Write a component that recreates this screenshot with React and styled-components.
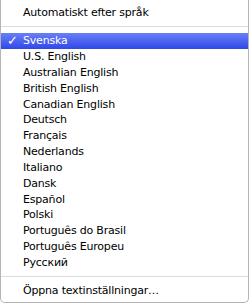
import React from 'react';
import styled, { createGlobalStyle } from 'styled-components';

const GlobalStyle = createGlobalStyle`
  body {
    margin: 0;
    background: #ffffff;
    font-family: "DejaVu Sans", "Liberation Sans", sans-serif;
  }
`;

const Menu = styled.div`
  width: 249px;
  height: 303px;
  box-sizing: border-box;
  background: #ffffff;
  border: 1px solid #b4b4b4;
  border-top: none;
  border-radius: 0 0 5px 5px;
  padding: 5px 0 4px;
  display: flex;
  flex-direction: column;
`;

const Item = styled.div`
  height: 16px;
  display: flex;
  align-items: center;
  padding-left: 22px;
  position: relative;
  font-size: 11px;
  letter-spacing: -0.2px;
  color: ${(p) => (p.selected ? '#ffffff' : '#000000')};
  background: ${(p) =>
    p.selected ? 'linear-gradient(#6a7ff5, #3048ea)' : 'transparent'};
  white-space: nowrap;
`;

const Check = styled.span`
  position: absolute;
  left: 6px;
  top: 0;
  line-height: 16px;
  font-size: 13px;
  font-weight: bold;
`;

const Separator = styled.div`
  height: 12px;
  display: flex;
  align-items: center;

  &::after {
    content: '';
    flex: 1;
    height: 1px;
    background: #dcdcdc;
  }
`;

const languages = [
  'U.S. English',
  'Australian English',
  'British English',
  'Canadian English',
  'Deutsch',
  'Français',
  'Nederlands',
  'Italiano',
  'Dansk',
  'Español',
  'Polski',
  'Português do Brasil',
  'Português Europeu',
  'Русский',
];

const App = () => {
  return (
    <>
      <GlobalStyle />
      <Menu>
        <Item>Automatiskt efter språk</Item>
        <Separator />
        <Item selected>
          <Check>✓</Check>
          Svenska
        </Item>
        {languages.map((name) => (
          <Item key={name}>{name}</Item>
        ))}
        <Separator />
        <Item>Öppna textinställningar…</Item>
      </Menu>
    </>
  );
};

export default App;
